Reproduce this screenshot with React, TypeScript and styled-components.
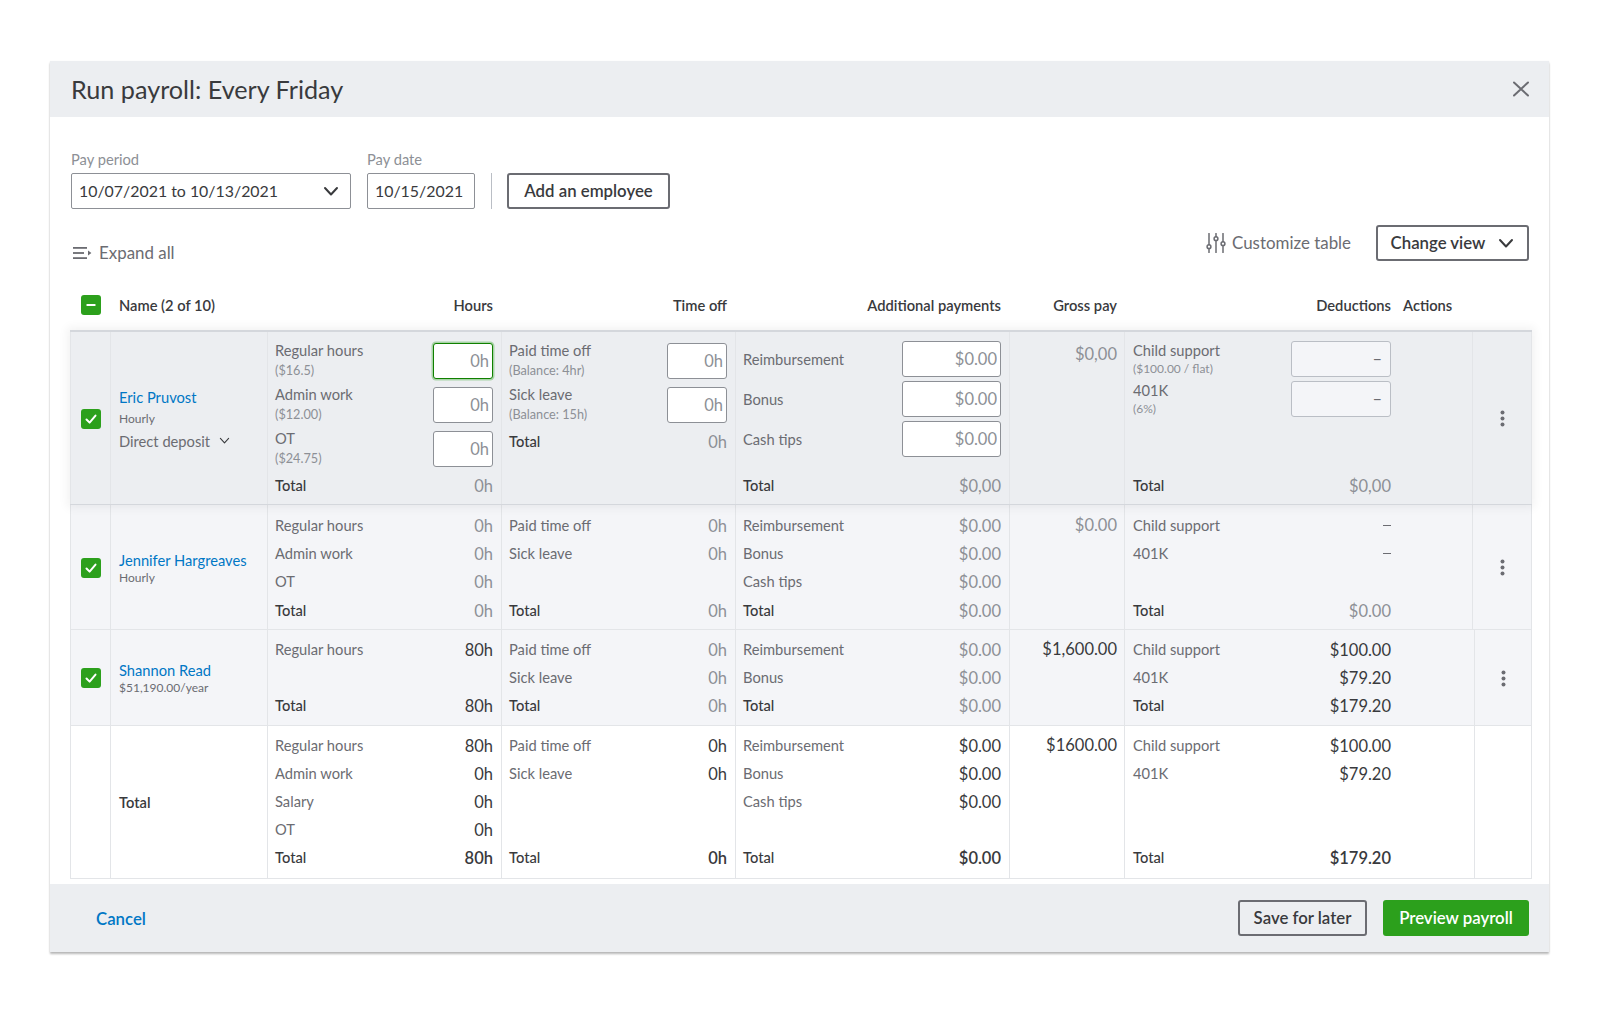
import React from "react";
import styled, { createGlobalStyle, css } from "styled-components";

const colors = {
  ink: "#393a3d",
  label: "#6b6c72",
  muted: "#8d9096",
  line: "#e3e5e8",
  panel: "#eceef1",
  tint: "#f4f5f8",
  link: "#0077c5",
  green: "#2ca01c",
};

const GlobalStyle = createGlobalStyle`
  html, body {
    margin: 0;
    background: #fff;
    font-family: Lato, "Open Sans", sans-serif;
    font-size: 14px;
    color: ${colors.ink};
  }
  * { box-sizing: border-box; }
`;

const Page = styled.div`
  width: 1600px;
  height: 1013px;
  padding: 61px 0 0 50px;
  overflow: hidden;
`;

const Modal = styled.div`
  width: 1499px;
  height: 891px;
  background: #fff;
  box-shadow: 0 2px 2px rgba(0, 0, 0, 0.28), 0 0 1px rgba(0, 0, 0, 0.06);
  display: flex;
  flex-direction: column;
`;

const Header = styled.div`
  height: 56px;
  flex: none;
  background: ${colors.panel};
  display: flex;
  align-items: center;
  justify-content: space-between;
  padding: 0 20px 1px 21px;
`;

const Title = styled.h1`
  margin: 0;
  font-size: 25.2px;
  font-weight: 400;
  color: ${colors.ink};
`;

const Body = styled.div`
  flex: 1;
  padding: 34px 17px 0 20px;
`;

const Filters = styled.div`
  display: flex;
  align-items: flex-end;
  padding-left: 1px;
`;

const Field = styled.div`
  display: flex;
  flex-direction: column;
  margin-right: 16px;
`;

const FieldLabel = styled.label`
  font-size: 14.7px;
  line-height: 16px;
  color: ${colors.muted};
  margin-bottom: 6px;
`;

const SelectBox = styled.div<{ $width: number }>`
  width: ${({ $width }) => $width}px;
  height: 36px;
  border: 1px solid ${colors.muted};
  border-radius: 2px;
  display: flex;
  align-items: center;
  justify-content: space-between;
  padding: 0 11px 2px 7px;
  font-size: 15.9px;
  color: ${colors.ink};
  svg {
    margin-top: 2px;
  }
`;

const Divider = styled.div`
  width: 1px;
  height: 36px;
  background: #babec5;
  margin-right: 15px;
`;

const OutlineButton = styled.button<{ $width: number }>`
  width: ${({ $width }) => $width}px;
  height: 36px;
  border: 2px solid ${colors.label};
  border-radius: 3px;
  background: transparent;
  font: 600 16.8px Lato, sans-serif;
  color: ${colors.ink};
  display: flex;
  align-items: center;
  justify-content: center;
  gap: 13px;
  padding: 0 0 1px;
  svg {
    margin-top: 1px;
  }
`;

const Toolbar = styled.div`
  margin-top: 16px;
  height: 36px;
  display: flex;
  justify-content: space-between;
  align-items: flex-start;
  padding: 0 3px 0 3px;
`;

const GhostAction = styled.div`
  display: flex;
  align-items: center;
  gap: 6px;
  font-size: 16.9px;
  line-height: 20px;
  color: ${colors.label};
`;

const ExpandAll = styled(GhostAction)`
  margin-top: 18px;
  gap: 7px;
`;

const ToolbarRight = styled.div`
  display: flex;
  align-items: center;
  gap: 25px;
  height: 36px;
`;

const HeadRow = styled.div`
  display: grid;
  grid-template-columns: 40px 157px 234px 234px 274px 116px 347px 60px;
  height: 20px;
  margin: 34px 0 15px;
  align-items: center;
  font-weight: 600;
  font-size: 14.7px;
  line-height: 18px;
  color: ${colors.ink};
`;

const HeadCheck = styled.div`
  display: flex;
  justify-content: center;
  padding-left: 1px;
`;

const HeadName = styled.div`
  padding-left: 9px;
`;

const HeadRight = styled.div`
  text-align: right;
  padding-right: 8px;
`;

const HeadDeductions = styled.div`
  display: grid;
  grid-template-columns: 266px auto;
  column-gap: 12px;
  text-align: right;
  span + span {
    text-align: left;
  }
`;

type RowProps = {
  $height: number;
  $tone: "focus" | "tint" | "plain";
  $top: number;
  $bottom: number;
  $wideDeductions?: boolean;
};

const Row = styled.div<RowProps>`
  --cell-top: ${({ $top }) => $top}px;
  --cell-bottom: ${({ $bottom }) => $bottom}px;
  display: grid;
  grid-template-columns: ${({ $wideDeductions }) =>
    $wideDeductions
      ? "40px 157px 234px 234px 274px 115px 350px 58px"
      : "40px 157px 234px 234px 274px 115px 348px 60px"};
  height: ${({ $height }) => $height}px;
  border-bottom: 1px solid ${colors.line};
  background: ${({ $tone }) =>
    $tone === "focus" ? colors.panel : $tone === "tint" ? colors.tint : "#fff"};
  ${({ $tone }) =>
    $tone === "focus" &&
    css`
      position: relative;
      border-top: 2px solid #d4d7dc;
      border-bottom-color: #d4d7dc;
      box-shadow: 0 0 9px 3px rgba(0, 0, 0, 0.05);
    `}
`;

const Cell = styled.div<{ $top?: number; $bottom?: number; $end?: boolean }>`
  display: flex;
  flex-direction: column;
  padding-top: ${({ $top }) => ($top === undefined ? "var(--cell-top)" : `${$top}px`)};
  padding-bottom: ${({ $bottom }) => ($bottom === undefined ? "var(--cell-bottom)" : `${$bottom}px`)};
  padding-left: 7px;
  padding-right: 8px;
  border-left: 1px solid ${colors.line};
  ${({ $end }) =>
    $end &&
    css`
      border-right: 1px solid ${colors.line};
    `}
`;

const WideCell = styled(Cell)<{ $right?: number }>`
  padding-left: 8px;
  padding-right: ${({ $right = 81 }) => $right}px;
`;

const GrossCell = styled(Cell)`
  padding-right: 7px;
  text-align: right;
`;

const CenterCell = styled(Cell)`
  align-items: center;
  justify-content: center;
  padding: 1px 0 0;
`;

const NameCell = styled(Cell)`
  justify-content: center;
  padding: 3px 8px 0;
`;

const NameLink = styled.a`
  font-size: 14.7px;
  line-height: 18px;
  color: ${colors.link};
`;

const NameNote = styled.div`
  font-size: 12px;
  line-height: 18px;
  color: ${colors.label};
`;

const FocusName = styled.div`
  display: flex;
  flex-direction: column;
  gap: 4px;
  padding-bottom: 2px;
`;

const DepositLine = styled.div`
  display: flex;
  align-items: center;
  gap: 9px;
  font-size: 14.7px;
  line-height: 18px;
  color: ${colors.label};
`;

const TotalLabel = styled.div`
  font-size: 14.7px;
  font-weight: 600;
  color: ${colors.ink};
  padding-bottom: 4px;
`;

const Line = styled.div<{ $compact?: boolean; $pinned?: boolean }>`
  display: flex;
  justify-content: space-between;
  align-items: center;
  height: ${({ $compact }) => ($compact ? 20 : 28)}px;
  flex: none;
  ${({ $pinned }) =>
    $pinned &&
    css`
      margin-top: auto;
    `}
`;

const Label = styled.span<{ $total?: boolean }>`
  font-size: 14.7px;
  color: ${({ $total }) => ($total ? colors.ink : colors.label)};
  font-weight: ${({ $total }) => ($total ? 500 : 400)};
`;

const Value = styled.span<{ $tone?: "muted" | "dark"; $strong?: boolean }>`
  font-size: 16.5px;
  padding-top: 2px;
  color: ${({ $tone }) => ($tone === "dark" ? colors.ink : colors.muted)};
  font-weight: ${({ $strong }) => ($strong ? 600 : 400)};
`;

const Dash = styled.span`
  display: block;
  width: 8px;
  height: 1px;
  background: ${colors.label};
`;

const InputLine = styled.div<{ $gap: number }>`
  display: flex;
  justify-content: space-between;
  align-items: flex-start;
  height: 36px;
  flex: none;
  margin-bottom: ${({ $gap }) => $gap}px;
`;

const LabelStack = styled.div<{ $inset: number }>`
  display: flex;
  flex-direction: column;
  margin-top: ${({ $inset }) => $inset}px;
  span {
    line-height: 16px;
  }
`;

const SubLabel = styled.small<{ $gap: number; $size: number }>`
  font-size: ${({ $size }) => $size}px;
  line-height: 14px;
  color: ${colors.muted};
  margin-top: ${({ $gap }) => $gap}px;
`;

const CenteredLabel = styled(Label)`
  align-self: center;
  padding-bottom: 1px;
`;

const Amount = styled.input<{ $width: number; $focused?: boolean; $disabled?: boolean }>`
  width: ${({ $width }) => $width}px;
  height: 36px;
  flex: none;
  border: 1px solid ${colors.muted};
  border-radius: 3px;
  background: ${({ $disabled }) => ($disabled ? colors.tint : "#fff")};
  padding: 0 3px 0 0;
  text-align: right;
  font: 400 16.5px Lato, sans-serif;
  color: ${colors.muted};
  outline: none;
  ${({ $disabled }) =>
    $disabled &&
    css`
      border-color: #babec5;
      padding-right: 8px;
      color: ${colors.label};
    `}
  ${({ $focused }) =>
    $focused &&
    css`
      border: 1.5px solid #108000;
      box-shadow: 0 0 0 1.5px rgba(44, 160, 28, 0.35);
    `}
`;

const Footer = styled.div`
  height: 68px;
  flex: none;
  background: ${colors.panel};
  display: flex;
  align-items: center;
  justify-content: space-between;
  padding: 0 20px 0 46px;
`;

const Cancel = styled.a`
  font-size: 16.8px;
  font-weight: 600;
  color: ${colors.link};
`;

const FooterActions = styled.div`
  display: flex;
  gap: 16px;
`;

const PrimaryButton = styled.button`
  width: 146px;
  height: 36px;
  border: none;
  border-radius: 3px;
  background: ${colors.green};
  color: #fff;
  font: 600 16.8px Lato, sans-serif;
  padding: 0 0 1px;
`;

const Box = styled.span`
  width: 20px;
  height: 20px;
  border-radius: 3px;
  background: ${colors.green};
  display: inline-flex;
  align-items: center;
  justify-content: center;
`;

const Checked = () => (
  <Box>
    <svg width="14" height="14" viewBox="0 0 14 14" fill="none">
      <path d="M2.5 7.5 5.6 10.6 11.5 3.6" stroke="#fff" strokeWidth="2" strokeLinecap="round" strokeLinejoin="round" />
    </svg>
  </Box>
);

const Partial = () => (
  <Box>
    <svg width="14" height="14" viewBox="0 0 14 14">
      <rect x="2.5" y="6" width="9" height="2" rx="0.5" fill="#fff" />
    </svg>
  </Box>
);

const Chevron = ({ size = 16, weight = 2 }: { size?: number; weight?: number }) => (
  <svg width={size} height={size} viewBox="0 0 16 16" fill="none">
    <path d="M2 5l6 6.5L14 5" stroke={colors.ink} strokeWidth={weight} strokeLinecap="round" strokeLinejoin="round" />
  </svg>
);

const CloseIcon = () => (
  <svg width="16" height="16" viewBox="0 0 16 16" fill="none">
    <path d="M1 1.5l14 13M15 1.5l-14 13" stroke={colors.label} strokeWidth="2" strokeLinecap="round" />
  </svg>
);

const ExpandIcon = () => (
  <svg width="19" height="14" viewBox="0 0 19 14">
    <rect x="0" y="1" width="14" height="1.8" fill={colors.label} />
    <rect x="0" y="6.1" width="11" height="1.8" fill={colors.label} />
    <rect x="0" y="11.2" width="14" height="1.8" fill={colors.label} />
    <path d="M15 4.4 18.4 7 15 9.6z" fill={colors.label} />
  </svg>
);

const TuneIcon = () => (
  <svg width="20" height="20" viewBox="0 0 20 20" fill="none" stroke={colors.label} strokeWidth="1.5">
    <path d="M3 0.5v11.3M3 15.7v3.8M10 0.5v3.3M10 7.7v11.8M17 0.5v8.3M17 12.7v6.8" strokeLinecap="round" />
    <circle cx="3" cy="13.7" r="1.9" />
    <circle cx="10" cy="5.7" r="1.9" />
    <circle cx="17" cy="10.7" r="1.9" />
  </svg>
);

const Kebab = () => (
  <svg width="5" height="17" viewBox="0 0 5 17" fill={colors.label}>
    <circle cx="2.5" cy="2.5" r="2" />
    <circle cx="2.5" cy="8.5" r="2" />
    <circle cx="2.5" cy="14.5" r="2" />
  </svg>
);

type LineData = { label: string; value?: string; dark?: boolean; strong?: boolean; dash?: boolean };

const Lines = ({ items }: { items: LineData[] }) => (
  <>
    {items.map((item) => (
      <Line key={item.label}>
        <Label>{item.label}</Label>
        {item.dash ? <Dash /> : <Value $tone={item.dark ? "dark" : "muted"} $strong={item.strong}>{item.value}</Value>}
      </Line>
    ))}
  </>
);

const TotalLine = ({ value, dark, strong, compact }: { value: string; dark?: boolean; strong?: boolean; compact?: boolean }) => (
  <Line $pinned $compact={compact}>
    <Label $total>Total</Label>
    <Value $tone={dark ? "dark" : "muted"} $strong={strong}>{value}</Value>
  </Line>
);

const HourInput = ({ label, note, focused }: { label: string; note: string; focused?: boolean }) => (
  <InputLine $gap={8}>
    <LabelStack $inset={-1}>
      <Label>{label}</Label>
      <SubLabel $gap={5} $size={12.7}>{note}</SubLabel>
    </LabelStack>
    <Amount $width={60} $focused={focused} value="0h" readOnly />
  </InputLine>
);

const PayInput = ({ label }: { label: string }) => (
  <InputLine $gap={4}>
    <CenteredLabel>{label}</CenteredLabel>
    <Amount $width={99} value="$0.00" readOnly />
  </InputLine>
);

const DeductionInput = ({ label, note }: { label: string; note: string }) => (
  <InputLine $gap={4}>
    <LabelStack $inset={1}>
      <Label>{label}</Label>
      <SubLabel $gap={4} $size={12}>{note}</SubLabel>
    </LabelStack>
    <Amount $width={100} $disabled value="–" readOnly />
  </InputLine>
);

const GrossValue = styled.div`
  line-height: 28px;
`;

const FocusGross = styled.div`
  line-height: 26px;
`;

const pay = (dark = false) => [
  { label: "Reimbursement", value: "$0.00", dark },
  { label: "Bonus", value: "$0.00", dark },
  { label: "Cash tips", value: "$0.00", dark },
];

export default function App() {
  return (
    <Page>
      <GlobalStyle />
      <Modal>
        <Header>
          <Title>Run payroll: Every Friday</Title>
          <CloseIcon />
        </Header>
        <Body>
          <Filters>
            <Field>
              <FieldLabel>Pay period</FieldLabel>
              <SelectBox $width={280}>
                10/07/2021 to 10/13/2021
                <Chevron />
              </SelectBox>
            </Field>
            <Field>
              <FieldLabel>Pay date</FieldLabel>
              <SelectBox $width={108}>10/15/2021</SelectBox>
            </Field>
            <Divider />
            <OutlineButton $width={163}>Add an employee</OutlineButton>
          </Filters>

          <Toolbar>
            <ExpandAll>
              <ExpandIcon />
              Expand all
            </ExpandAll>
            <ToolbarRight>
              <GhostAction>
                <TuneIcon />
                Customize table
              </GhostAction>
              <OutlineButton $width={153}>
                Change view
                <Chevron />
              </OutlineButton>
            </ToolbarRight>
          </Toolbar>

          <HeadRow>
            <HeadCheck>
              <Partial />
            </HeadCheck>
            <HeadName>Name (2 of 10)</HeadName>
            <HeadRight>Hours</HeadRight>
            <HeadRight>Time off</HeadRight>
            <HeadRight>Additional payments</HeadRight>
            <HeadRight>Gross pay</HeadRight>
            <HeadDeductions>
              <span>Deductions</span>
              <span>Actions</span>
            </HeadDeductions>
          </HeadRow>

          <Row $height={175} $tone="focus" $top={9} $bottom={9}>
            <CenterCell>
              <Checked />
            </CenterCell>
            <NameCell>
              <FocusName>
                <NameLink>Eric Pruvost</NameLink>
                <NameNote>Hourly</NameNote>
                <DepositLine>
                  Direct deposit
                  <Chevron size={11} weight={1.6} />
                </DepositLine>
              </FocusName>
            </NameCell>
            <Cell $top={11}>
              <HourInput label="Regular hours" note="($16.5)" focused />
              <HourInput label="Admin work" note="($12.00)" />
              <HourInput label="OT" note="($24.75)" />
              <TotalLine value="0h" compact />
            </Cell>
            <Cell $top={11}>
              <HourInput label="Paid time off" note="(Balance: 4hr)" />
              <HourInput label="Sick leave" note="(Balance: 15h)" />
              <Line $compact>
                <Label $total>Total</Label>
                <Value>0h</Value>
              </Line>
            </Cell>
            <Cell>
              <PayInput label="Reimbursement" />
              <PayInput label="Bonus" />
              <PayInput label="Cash tips" />
              <TotalLine value="$0,00" compact />
            </Cell>
            <GrossCell>
              <FocusGross>
                <Value>$0,00</Value>
              </FocusGross>
            </GrossCell>
            <WideCell>
              <DeductionInput label="Child support" note="($100.00 / flat)" />
              <DeductionInput label="401K" note="(6%)" />
              <TotalLine value="$0,00" compact />
            </WideCell>
            <CenterCell $end>
              <Kebab />
            </CenterCell>
          </Row>

          <Row $height={125} $tone="tint" $top={6} $bottom={5}>
            <CenterCell>
              <Checked />
            </CenterCell>
            <NameCell>
              <NameLink>Jennifer Hargreaves</NameLink>
              <NameNote>Hourly</NameNote>
            </NameCell>
            <Cell>
              <Lines
                items={[
                  { label: "Regular hours", value: "0h" },
                  { label: "Admin work", value: "0h" },
                  { label: "OT", value: "0h" },
                ]}
              />
              <TotalLine value="0h" />
            </Cell>
            <Cell>
              <Lines
                items={[
                  { label: "Paid time off", value: "0h" },
                  { label: "Sick leave", value: "0h" },
                ]}
              />
              <TotalLine value="0h" />
            </Cell>
            <Cell>
              <Lines items={pay()} />
              <TotalLine value="$0.00" />
            </Cell>
            <GrossCell>
              <GrossValue>
                <Value>$0.00</Value>
              </GrossValue>
            </GrossCell>
            <WideCell>
              <Lines
                items={[
                  { label: "Child support", dash: true },
                  { label: "401K", dash: true },
                ]}
              />
              <TotalLine value="$0.00" />
            </WideCell>
            <CenterCell $end>
              <Kebab />
            </CenterCell>
          </Row>

          <Row $height={96} $tone="tint" $top={5} $bottom={6} $wideDeductions>
            <CenterCell>
              <Checked />
            </CenterCell>
            <NameCell>
              <NameLink>Shannon Read</NameLink>
              <NameNote>$51,190.00/year</NameNote>
            </NameCell>
            <Cell>
              <Lines items={[{ label: "Regular hours", value: "80h", dark: true }]} />
              <TotalLine value="80h" dark />
            </Cell>
            <Cell>
              <Lines
                items={[
                  { label: "Paid time off", value: "0h" },
                  { label: "Sick leave", value: "0h" },
                ]}
              />
              <TotalLine value="0h" />
            </Cell>
            <Cell>
              <Lines
                items={[
                  { label: "Reimbursement", value: "$0.00" },
                  { label: "Bonus", value: "$0.00" },
                ]}
              />
              <TotalLine value="$0.00" />
            </Cell>
            <GrossCell>
              <GrossValue>
                <Value $tone="dark">$1,600.00</Value>
              </GrossValue>
            </GrossCell>
            <WideCell $right={83}>
              <Lines
                items={[
                  { label: "Child support", value: "$100.00", dark: true },
                  { label: "401K", value: "$79.20", dark: true },
                ]}
              />
              <TotalLine value="$179.20" dark />
            </WideCell>
            <CenterCell $end>
              <Kebab />
            </CenterCell>
          </Row>

          <Row $height={153} $tone="plain" $top={5} $bottom={7} $wideDeductions>
            <CenterCell />
            <NameCell>
              <TotalLabel>Total</TotalLabel>
            </NameCell>
            <Cell>
              <Lines
                items={[
                  { label: "Regular hours", value: "80h", dark: true },
                  { label: "Admin work", value: "0h", dark: true },
                  { label: "Salary", value: "0h", dark: true },
                  { label: "OT", value: "0h", dark: true },
                ]}
              />
              <TotalLine value="80h" dark strong />
            </Cell>
            <Cell>
              <Lines
                items={[
                  { label: "Paid time off", value: "0h", dark: true },
                  { label: "Sick leave", value: "0h", dark: true },
                ]}
              />
              <TotalLine value="0h" dark strong />
            </Cell>
            <Cell>
              <Lines items={pay(true)} />
              <TotalLine value="$0.00" dark strong />
            </Cell>
            <GrossCell>
              <GrossValue>
                <Value $tone="dark">$1600.00</Value>
              </GrossValue>
            </GrossCell>
            <WideCell $right={83}>
              <Lines
                items={[
                  { label: "Child support", value: "$100.00", dark: true },
                  { label: "401K", value: "$79.20", dark: true },
                ]}
              />
              <TotalLine value="$179.20" dark strong />
            </WideCell>
            <CenterCell $end />
          </Row>
        </Body>
        <Footer>
          <Cancel>Cancel</Cancel>
          <FooterActions>
            <OutlineButton $width={129}>Save for later</OutlineButton>
            <PrimaryButton>Preview payroll</PrimaryButton>
          </FooterActions>
        </Footer>
      </Modal>
    </Page>
  );
}
